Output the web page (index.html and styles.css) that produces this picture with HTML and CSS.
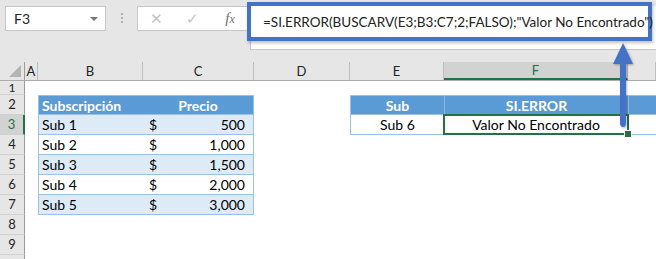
FILE: index.html
```html
<!DOCTYPE html>
<html>
<head>
  <title>SI.ERROR BUSCARV</title>
  <link rel="stylesheet" href="styles.css">
</head>
<body>
  <div class="window">
    <div class="toolbar">
      <div class="namebox">
        <span>F3</span>
        <span class="caret"></span>
      </div>
      <div class="grip"><i></i><i></i><i></i></div>
      <div class="fx-buttons">
        <span class="fx-btn muted">&#x2715;</span>
        <span class="fx-btn muted">&#x2713;</span>
        <span class="fx-btn fx"><i>f</i><i>x</i></span>
      </div>
      <div class="formula-bar"></div>
      <div class="formula-focus">=SI.ERROR(BUSCARV(E3;B3:C7;2;FALSO);"Valor No Encontrado")</div>
    </div>

    <div class="sheet">
      <div class="row col-heads">
        <div class="corner"></div>
        <div>A</div>
        <div>B</div>
        <div>C</div>
        <div>D</div>
        <div>E</div>
        <div class="active">F</div>
        <div></div>
      </div>

      <div class="row short">
        <div class="rh">1</div>
        <div></div><div></div><div></div><div></div><div></div><div></div><div></div>
      </div>

      <div class="row">
        <div class="rh">2</div>
        <div></div>
        <div class="th t1-left">Subscripción</div>
        <div class="th t1-right center">Precio</div>
        <div></div>
        <div class="th t2-left center">Sub</div>
        <div class="th center split">SI.ERROR</div>
        <div class="th split"></div>
      </div>

      <div class="row">
        <div class="rh active">3</div>
        <div></div>
        <div class="td band t1-left">Sub 1</div>
        <div class="td band t1-right money"><span>$</span><span>500</span></div>
        <div></div>
        <div class="td t2-left center">Sub 6</div>
        <div class="td center selected">Valor No Encontrado</div>
        <div class="td"></div>
      </div>

      <div class="row">
        <div class="rh">4</div>
        <div></div>
        <div class="td t1-left">Sub 2</div>
        <div class="td t1-right money"><span>$</span><span>1,000</span></div>
        <div></div><div></div><div></div><div></div>
      </div>

      <div class="row">
        <div class="rh">5</div>
        <div></div>
        <div class="td band t1-left">Sub 3</div>
        <div class="td band t1-right money"><span>$</span><span>1,500</span></div>
        <div></div><div></div><div></div><div></div>
      </div>

      <div class="row">
        <div class="rh">6</div>
        <div></div>
        <div class="td t1-left">Sub 4</div>
        <div class="td t1-right money"><span>$</span><span>2,000</span></div>
        <div></div><div></div><div></div><div></div>
      </div>

      <div class="row">
        <div class="rh">7</div>
        <div></div>
        <div class="td band t1-left">Sub 5</div>
        <div class="td band t1-right money"><span>$</span><span>3,000</span></div>
        <div></div><div></div><div></div><div></div>
      </div>

      <div class="row">
        <div class="rh">8</div>
        <div></div><div></div><div></div><div></div><div></div><div></div><div></div>
      </div>

      <div class="row">
        <div class="rh">9</div>
        <div></div><div></div><div></div><div></div><div></div><div></div><div></div>
      </div>

      <div class="row">
        <div class="rh"></div>
        <div></div><div></div><div></div><div></div><div></div><div></div><div></div>
      </div>
    </div>

    <svg class="arrow" width="30" height="96" viewBox="0 0 30 96">
      <path d="M13 22 L13 82 Q13 86 16 86 Q19 86 19 82 L19 22 Z" fill="#4472c4"/>
      <path d="M6 23 L16 2 L26 23 Z" fill="#4472c4"/>
    </svg>
  </div>
</body>
</html>
```

FILE: styles.css
```css
:root {
  --xl-bg: #e6e6e6;
  --xl-head: #e6e6e6;
  --xl-head-active: #d2d2d2;
  --xl-head-line: #bdbdbd;
  --xl-green: #217346;
  --xl-box-line: #c6c6c6;
  --tbl-head: #5b9bd5;
  --tbl-band: #ddebf7;
  --tbl-line: #9bc2e6;
  --focus-blue: #4472c4;
  --cols: 25px 13px 105px 111px 96px 94px 184px 1fr;
  --font: Lato, "Liberation Sans", Arial, sans-serif;
}

* {
  margin: 0;
  padding: 0;
  box-sizing: border-box;
}

body {
  width: 656px;
  height: 259px;
  overflow: hidden;
  background: var(--xl-bg);
  font-family: var(--font);
  color: #000;
}

.window {
  position: relative;
  height: 259px;
  overflow: hidden;
}

/* formula bar strip */

.toolbar {
  position: relative;
  display: flex;
  align-items: flex-start;
  height: 62px;
  padding-top: 6px;
}

.namebox {
  display: flex;
  align-items: center;
  justify-content: space-between;
  width: 101px;
  height: 25px;
  margin-left: 5px;
  padding: 0 7px 0 8px;
  background: #fff;
  border: 1px solid var(--xl-box-line);
  font-size: 14px;
  color: #222;
}

.caret {
  width: 0;
  height: 0;
  border-left: 4px solid transparent;
  border-right: 4px solid transparent;
  border-top: 4px solid #777;
}

.grip {
  display: flex;
  flex-direction: column;
  align-items: center;
  gap: 2px;
  width: 31px;
  padding-top: 7px;
}

.grip i {
  width: 2px;
  height: 2px;
  background: #b0b0b0;
}

.fx-buttons {
  display: flex;
  align-items: center;
  width: 113px;
  height: 25px;
  background: #fff;
  border: 1px solid var(--xl-box-line);
  border-right: none;
}

.fx-btn {
  width: 36px;
  text-align: center;
  font-size: 15px;
}

.fx-btn.muted {
  color: #c3c3c3;
}

.fx-btn.fx {
  font-family: "Liberation Serif", serif;
  color: #6f6f6f;
  font-size: 15px;
  padding-left: 4px;
}

.fx-btn.fx i:last-child {
  font-size: 12px;
}

.formula-bar {
  flex: 1;
  height: 44px;
  background: #fff;
  border-left: 1px solid var(--xl-box-line);
  border-bottom: 1px solid var(--xl-box-line);
}

.formula-focus {
  position: absolute;
  left: 247px;
  top: 2px;
  width: 405px;
  height: 39px;
  padding: 0 0 0 12px;
  display: flex;
  align-items: center;
  background: #fff;
  border: 4px solid var(--focus-blue);
  box-shadow: 1px 2px 3px rgba(0, 0, 0, 0.25);
  font-size: 13.5px;
  color: #222;
  white-space: nowrap;
}

/* sheet grid */

.sheet {
  background: #fff;
}

.row {
  display: grid;
  grid-template-columns: var(--cols);
  height: 20px;
  font-size: 14px;
}

.row.short {
  height: 14px;
}

.row > div {
  display: flex;
  align-items: center;
  white-space: nowrap;
  overflow: hidden;
}

.col-heads {
  height: 19px;
  background: var(--xl-head);
  border-bottom: 1px solid #ababab;
  font-size: 13px;
}

.col-heads > div {
  justify-content: center;
  border-right: 1px solid var(--xl-head-line);
  color: #222;
}

.col-heads > div.active {
  background: var(--xl-head-active);
  color: var(--xl-green);
  border-bottom: 2px solid var(--xl-green);
}

.col-heads .corner {
  position: relative;
  border-right: 1px solid #9b9b9b;
}

.corner::after {
  content: "";
  position: absolute;
  right: 3px;
  bottom: 3px;
  border-left: 12px solid transparent;
  border-bottom: 12px solid #b4b4b4;
}

.rh {
  justify-content: center;
  background: var(--xl-head);
  border-right: 1px solid #9b9b9b;
  border-bottom: 1px solid #d0d0d0;
  color: #222;
  font-size: 13px;
  line-height: 13px;
}

.row.short .rh {
  font-size: 12px;
  line-height: 12px;
  overflow: visible;
}

.rh.active {
  background: var(--xl-head-active);
  color: var(--xl-green);
  border-right: 2px solid var(--xl-green);
}

/* formatted tables */

.th {
  background: var(--tbl-head);
  color: #fff;
  font-weight: bold;
  padding-left: 3px;
  border-top: 1px solid var(--tbl-line);
  border-bottom: 1px solid var(--tbl-line);
}

.td {
  padding-left: 3px;
  border-bottom: 1px solid var(--tbl-line);
}

.band {
  background: var(--tbl-band);
}

.center {
  justify-content: center;
  padding-left: 0;
}

.t1-left,
.t2-left {
  border-left: 1px solid var(--tbl-line);
}

.t1-right {
  border-right: 1px solid var(--tbl-line);
}

.split {
  border-left: 1px solid #8cb7e0;
}

.money {
  justify-content: space-between;
  padding: 0 8px 0 6px;
}

.selected {
  position: relative;
  overflow: visible !important;
}

.selected::after {
  content: "";
  position: absolute;
  left: -1px;
  top: -1px;
  right: -1px;
  bottom: -1px;
  border: 2px solid var(--xl-green);
}

.selected::before {
  content: "";
  position: absolute;
  right: -4px;
  bottom: -4px;
  width: 6px;
  height: 6px;
  background: var(--xl-green);
  border: 1px solid #fff;
  z-index: 1;
}

.arrow {
  position: absolute;
  left: 607px;
  top: 41px;
  filter: drop-shadow(1px 1px 1px rgba(0, 0, 0, 0.3));
}
```
